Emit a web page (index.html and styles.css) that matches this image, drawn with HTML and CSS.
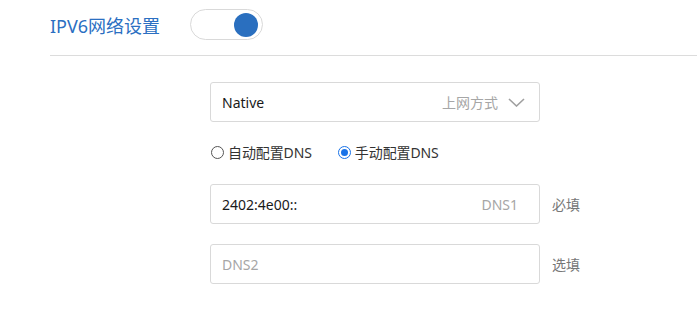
FILE: index.html
```html
<!DOCTYPE html>
<html lang="zh">
<head>
<meta charset="utf-8">
<link rel="stylesheet" href="styles.css">
</head>
<body>
<div class="header">
  <span class="title">IPV6网络设置</span>
  <span class="toggle"><span class="knob"></span></span>
</div>
<div class="form">
  <div class="field select">
    <span class="value">Native</span>
    <span class="hint">上网方式</span>
    <svg class="chev" width="17" height="9" viewBox="0 0 17 9"><path d="M1 1 L8.5 8 L16 1" fill="none" stroke="#a0a0a0" stroke-width="1.6"/></svg>
  </div>
  <div class="radios">
    <label class="radio"><span class="dot"></span>自动配置DNS</label>
    <label class="radio on"><span class="dot"></span>手动配置DNS</label>
  </div>
  <div class="row">
    <div class="field">
      <span class="value">2402:4e00::</span>
      <span class="hint">DNS1</span>
    </div>
    <span class="side">必填</span>
  </div>
  <div class="row">
    <div class="field">
      <span class="placeholder">DNS2</span>
    </div>
    <span class="side">选填</span>
  </div>
</div>
</body>
</html>
```
FILE: styles.css
```css
* { box-sizing: border-box; }
body {
  margin: 0;
  background: #fff;
  font-family: "Noto Sans", "Noto Sans CJK SC", sans-serif;
  font-size: 14px;
  color: #222;
}
.header {
  margin-left: 50px;
  height: 56px;
  border-bottom: 1px solid #dcdcdc;
  display: flex;
  align-items: center;
  padding-bottom: 6px;
}
.title {
  font-size: 18px;
  color: #2b6fc2;
  width: 140px;
}
.toggle {
  width: 73px;
  height: 31px;
  border: 1px solid #d9d9d9;
  border-radius: 16px;
  display: flex;
  align-items: center;
  justify-content: flex-end;
  padding-right: 4px;
}
.knob {
  width: 24px;
  height: 24px;
  border-radius: 50%;
  background: #2a6fbf;
}
.form {
  margin-left: 210px;
  padding-top: 26px;
  display: flex;
  flex-direction: column;
}
.field {
  width: 330px;
  height: 40px;
  border: 1px solid #d9d9d9;
  border-radius: 3px;
  display: flex;
  align-items: center;
  padding: 0 21px 0 11px;
}
.value { color: #1a1a1a; flex: 1; }
.placeholder { color: #a6a6a6; flex: 1; }
.hint { color: #a6a6a6; }
.select { padding-right: 14px; }
.chev { margin-left: 10px; margin-top: 1px; }
.radios {
  display: flex;
  gap: 25px;
  margin-top: 20px;
  height: 20px;
  align-items: center;
}
.radio {
  display: flex;
  align-items: center;
  gap: 4px;
  color: #333;
  letter-spacing: -0.1px;
}
.dot {
  width: 13px;
  height: 13px;
  margin-left: 1px;
  border-radius: 50%;
  border: 1px solid #555;
  background: #fff;
  position: relative;
}
.radio.on .dot {
  border-color: #1a73e8;
}
.radio.on .dot::after {
  content: "";
  position: absolute;
  left: 2px;
  top: 2px;
  width: 7px;
  height: 7px;
  border-radius: 50%;
  background: #1a73e8;
}
.row {
  display: flex;
  align-items: center;
  gap: 12px;
  margin-top: 22px;
}
.row + .row { margin-top: 20px; }
.side { color: #777; }
```
